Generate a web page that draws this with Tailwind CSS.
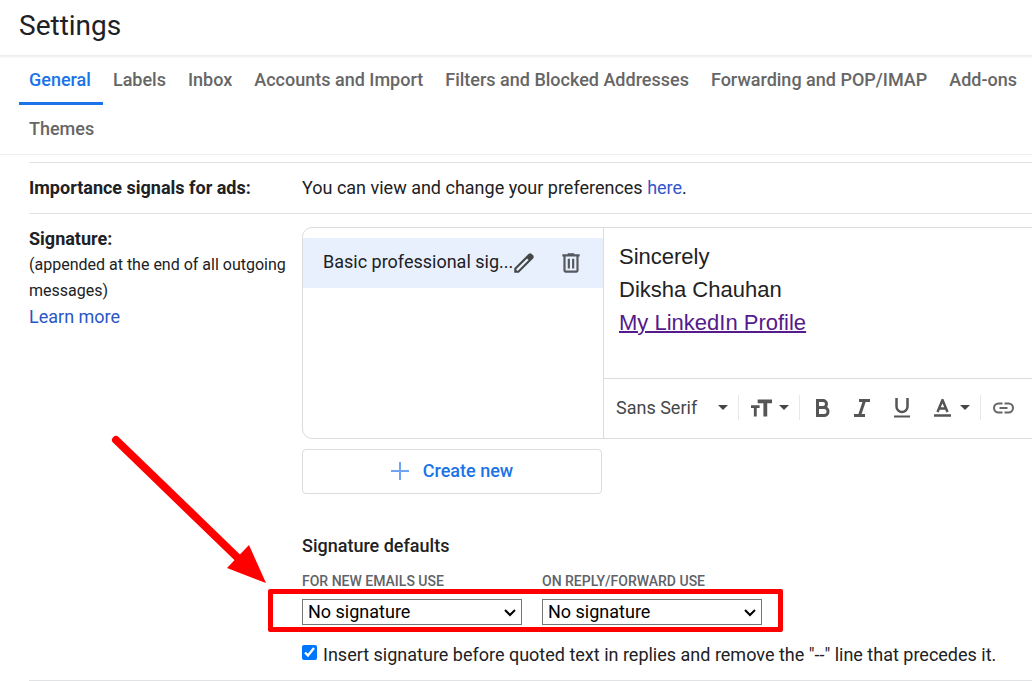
<!DOCTYPE html>
<html lang="en">
<head>
    <meta charset="UTF-8">
    <meta name="viewport" content="width=device-width, initial-scale=1.0">
    <script src="https://cdn.jsdelivr.net/npm/@tailwindcss/browser@4"></script>
    <title>Settings</title>
</head>
<body class="bg-white font-[Roboto,'Noto_Sans',sans-serif] text-[18px] leading-[26px] text-[#202124] overflow-x-hidden">
<div class="w-full overflow-hidden">
    <header class="h-[56px] px-[19px] pt-[8px] border-b border-[#eceef0] shadow-[0_1px_2px_rgba(0,0,0,0.08)]">
        <h1 class="text-[28px] leading-[36px]">Settings</h1>
    </header>

    <!-- Tabs -->
    <nav class="flex flex-wrap pl-[19px] border-b border-[#eceff1] font-medium text-[#666666] whitespace-nowrap">
        <a href="#" class="h-[49px] pl-[10px] pr-[12px] pt-[11px] border-b-3 border-[#1a73e8] text-[#1a73e8]">General</a>
        <a href="#" class="h-[49px] pl-[10px] pr-[12px] pt-[11px]">Labels</a>
        <a href="#" class="h-[49px] pl-[10px] pr-[12px] pt-[11px]">Inbox</a>
        <a href="#" class="h-[49px] pl-[10px] pr-[12px] pt-[11px]">Accounts and Import</a>
        <a href="#" class="h-[49px] pl-[10px] pr-[12px] pt-[11px]">Filters and Blocked Addresses</a>
        <a href="#" class="h-[49px] pl-[10px] pr-[12px] pt-[11px]">Forwarding and POP/IMAP</a>
        <a href="#" class="h-[49px] pl-[10px] pr-[12px] pt-[11px]">Add-ons</a>
        <a href="#" class="h-[49px] pl-[10px] pr-[12px] pt-[11px]">Themes</a>
    </nav>

    <main class="pl-[29px] pt-[7px]">
        <section class="grid grid-cols-[273px_minmax(0,1fr)] border-t border-[#e0e2e4] py-[12px]">
            <h2 class="font-bold">Importance signals for ads:</h2>
            <p>You can view and change your preferences <a href="#" class="text-[#3355cc]">here</a>.</p>
        </section>

        <section class="grid grid-cols-[273px_minmax(0,1fr)] border-y border-[#e0e2e4] py-[12px]">
            <div>
                <h2 class="font-bold">Signature:</h2>
                <p class="text-[16px]">(appended at the end of all outgoing messages)</p>
                <a href="#" class="text-[#2a56c6]">Learn more</a>
            </div>

            <div class="pt-px">
                <!-- Signature list and editor -->
                <div class="flex h-[212px] -mr-4 border border-[#dadce0] rounded-[10px]">
                    <div class="w-[301px] shrink-0 pt-[10px] border-r border-[#dadce0]">
                        <div class="flex items-center h-[50px] pl-[20px] bg-[#e8f0fe]">
                            <span class="w-[186px] pb-[2px] whitespace-nowrap">Basic professional sig...</span>
                            <button type="button" aria-label="Edit" class="ml-[2px]">
                                <svg class="w-[26px] h-[26px]" viewBox="0 0 24 24" fill="#444746">
                                    <path d="M20.41 4.94l-1.35-1.35c-.78-.78-2.05-.78-2.83 0L3 16.82V21h4.18L20.41 7.77c.79-.78.79-2.05 0-2.83zm-14 14.12L5 19v-1.36l9.82-9.82 1.41 1.41-9.82 9.83z"/>
                                </svg>
                            </button>
                            <button type="button" aria-label="Delete" class="ml-[21px]">
                                <svg class="w-[26px] h-[26px]" viewBox="0 0 24 24" fill="#55585c">
                                    <path d="M15 4V3H9v1H4v2h1v13c0 1.100.9 2 2 2h10c1.100 0 2-.9 2-2V6h1V4h-5zm2 15H7V6h10v13zM9 8h2v9H9zm4 0h2v9h-2z"/>
                                </svg>
                            </button>
                        </div>
                    </div>
                    <div class="flex-1 min-w-0 flex flex-col">
                        <div class="flex-1 pl-[15px] pt-[12px] font-['Liberation_Sans',Arial,sans-serif] text-[22px] leading-[33px] text-[#222]">
                            <p>Sincerely</p>
                            <p>Diksha Chauhan</p>
                            <p><a href="#" class="text-[#551a8b] underline decoration-2">My LinkedIn Profile</a></p>
                        </div>
                        <div class="flex items-center h-[60px] pb-[2px] border-t border-[#dadce0] text-[#444746] whitespace-nowrap">
                            <button type="button" class="flex items-center w-[134px] pl-[12px] text-left">
                                <span class="w-[101px]">Sans Serif</span>
                                <svg class="w-[12px] h-[6px]" viewBox="0 0 12 6" fill="currentColor"><path d="M1 0h10L6 5z"/></svg>
                            </button>
                            <button type="button" aria-label="Size" class="flex items-center w-[62px] h-[25px] border-x border-[#e6e8eb] pl-[12px]">
                                <svg class="w-[21px] h-[18px] mr-[6px]" viewBox="0 0 22 18" fill="#555555">
                                    <path d="M7 0h15v4h-5v14h-4V4H7zM0 6h9v3H6v9H3V9H0z"/>
                                </svg>
                                <svg class="w-[12px] h-[6px]" viewBox="0 0 12 6" fill="currentColor"><path d="M1 0h10L6 5z"/></svg>
                            </button>
                            <button type="button" aria-label="Bold" class="w-[40px] ml-[2px] flex justify-center">
                                <svg class="w-[15px] h-[18px]" viewBox="0 0 15 18" fill="none" stroke="#555555" stroke-width="3">
                                    <path d="M2.500 1.500h5.500a3.500 3.500 0 0 1 0 7H2.500h6.500a4 4 0 0 1 0 8H2.500z"/>
                                </svg>
                            </button>
                            <button type="button" aria-label="Italic" class="w-[40px] flex justify-center">
                                <svg class="w-[16px] h-[18px]" viewBox="0 0 16 18" fill="none" stroke="#555555" stroke-width="3">
                                    <path d="M5 1.500h11M0 16.500h11M10.500 1.500l-5 15"/>
                                </svg>
                            </button>
                            <button type="button" aria-label="Underline" class="w-[40px] flex justify-center">
                                <svg class="w-[16px] h-[20px]" viewBox="0 0 16 20" fill="none" stroke="#555555">
                                    <path stroke-width="2.500" d="M2.500 0v8.500a5.500 5.500 0 0 0 11 0V0"/>
                                    <path stroke-width="2" d="M0 18.500h16"/>
                                </svg>
                            </button>
                            <button type="button" aria-label="Text color" class="flex items-center w-[59px] h-[25px] border-r border-[#e6e8eb] pl-[12px]">
                                <svg class="w-[17px] h-[18px] mr-[8px]" viewBox="0 0 17 18" fill="none" stroke="#555555" stroke-width="2.500">
                                    <path d="M3.500 13L8.500 1l5 12M5 9.500h7M0 16.500h17"/>
                                </svg>
                                <svg class="w-[12px] h-[6px]" viewBox="0 0 12 6" fill="currentColor"><path d="M1 0h10L6 5z"/></svg>
                            </button>
                            <button type="button" aria-label="Link" class="ml-[12px]">
                                <svg class="w-[21px] h-[12px]" viewBox="0 0 21 12" fill="none" stroke="#666666" stroke-width="2">
                                    <path d="M9.500 1.500H5.500a4.500 4.500 0 0 0 0 9h4M11.500 1.500h4a4.500 4.500 0 0 1 0 9h-4M6.500 6h8"/>
                                </svg>
                            </button>
                        </div>
                    </div>
                </div>

                <button type="button" class="flex items-center justify-center w-[300px] h-[45px] pb-[2px] mt-[10px] border border-[#dadce0] rounded-[4px] font-medium text-[#1a73e8]">
                    <svg class="w-[18px] h-[18px] mr-[14px]" viewBox="0 0 18 18" fill="none" stroke="#6ea4f5" stroke-width="2"><path d="M9 0v18M0 9h18"/></svg>
                    Create new
                </button>

                <h3 class="mt-[39px] font-medium">Signature defaults</h3>

                <div class="flex gap-[20px] mt-[12px] font-medium text-[#5f6368]">
                    <label for="new-emails" class="w-[220px] text-[14px] leading-[20px]">FOR NEW EMAILS USE</label>
                    <label for="reply-forward" class="w-[220px] text-[14px] leading-[20px]">ON REPLY/FORWARD USE</label>
                </div>
                <div class="relative flex gap-[20px] w-max mt-[8px] text-black">
                    <div class="relative w-[220px]">
                        <select id="new-emails" class="block appearance-none w-full h-[26px] pl-[5px] pr-[24px] border border-[#767676] bg-white leading-[24px]">
                            <option>No signature</option>
                            <option>Basic professional signature</option>
                        </select>
                        <svg class="absolute right-[6px] top-[10px] w-[12px] h-[8px] pointer-events-none" viewBox="0 0 12 8" fill="none" stroke="#000" stroke-width="2"><path d="M1 1l5 5 5-5"/></svg>
                    </div>
                    <div class="relative w-[220px]">
                        <select id="reply-forward" class="block appearance-none w-full h-[26px] pl-[5px] pr-[24px] border border-[#767676] bg-white leading-[24px]">
                            <option>No signature</option>
                            <option>Basic professional signature</option>
                        </select>
                        <svg class="absolute right-[6px] top-[10px] w-[12px] h-[8px] pointer-events-none" viewBox="0 0 12 8" fill="none" stroke="#000" stroke-width="2"><path d="M1 1l5 5 5-5"/></svg>
                    </div>
                    <!-- Callout around both drop-downs, arrow pointing at its corner -->
                    <div class="absolute -left-[34px] -right-[21px] -top-[10px] -bottom-[7px] border-5 border-[#ff0000] rounded-[2px] pointer-events-none"></div>
                    <svg class="absolute -left-[192px] -top-[165px] w-[156px] h-[150px] pointer-events-none" viewBox="0 0 156 150">
                        <path d="M6 6l124 120" stroke="#ff0000" stroke-width="8" stroke-linecap="round"/>
                        <path d="M139 111l17 38-39-15z" fill="#ff0000"/>
                    </svg>
                </div>

                <div class="flex mt-[17px] whitespace-nowrap">
                    <input id="insert-before" type="checkbox" checked class="w-[15px] h-[15px] mt-[3px] mr-[6px] accent-[#0075ff]">
                    <label for="insert-before">Insert signature before quoted text in replies and remove the "--" line that precedes it.</label>
                </div>
            </div>
        </section>
    </main>
</div>
</body>
</html>
